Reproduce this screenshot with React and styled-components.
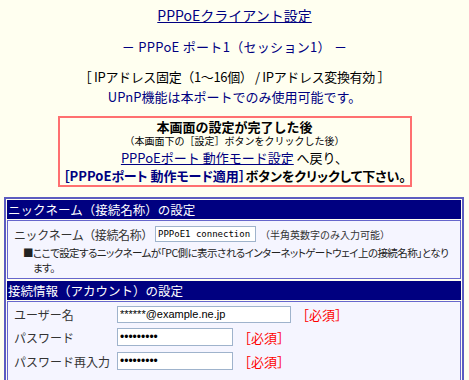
import styled, { createGlobalStyle } from "styled-components";

const GlobalStyle = createGlobalStyle`
  body {
    margin: 0;
    background: #fffff0;
    font-family: "Noto Sans CJK JP", "Liberation Sans", sans-serif;
    color: #000;
  }
`;

const Page = styled.div`
  display: flex;
  flex-direction: column;
  align-items: center;
`;

const Title = styled.a`
  margin-top: 7px;
  font-size: 14px;
  line-height: 16px;
  color: #000080;
  text-decoration: underline;
`;

const SubTitle = styled.div`
  margin-top: 16px;
  font-size: 13px;
  line-height: 16px;
  letter-spacing: 0.3px;
  color: #000080;
  white-space: pre;
`;

const Notice = styled.div`
  margin-top: 12px;
  font-size: 13px;
  line-height: 20px;
  letter-spacing: ${(p) => (p.$navy ? 0 : -0.35)}px;
  text-align: center;
  color: ${(p) => (p.$navy ? "#000080" : "#000")};
  & + & {
    margin-top: 0;
  }
`;

const AlertBox = styled.div`
  margin-top: 9px;
  width: 354px;
  box-sizing: border-box;
  border: 2px solid #ff7070;
  padding: 1px 0 1px;
  text-align: center;
`;

const AlertLine = styled.div`
  font-size: ${(p) => p.$size || 13}px;
  line-height: ${(p) => p.$lh || 17}px;
  font-weight: ${(p) => (p.$bold ? 700 : 400)};
  margin-top: ${(p) => p.$mt || 0}px;
  font-feature-settings: ${(p) => (p.$palt ? '"palt"' : "normal")};
  white-space: nowrap;
`;

const NavyLink = styled.a`
  color: #000080;
  text-decoration: underline;
`;

const Navy = styled.span`
  color: #000080;
`;

const Panel = styled.div`
  align-self: stretch;
  margin: 10px 5px 0 4px;
  border: 2px solid #5c5cc0;
  padding: 1px;
  display: flex;
  flex-direction: column;
  gap: 1px;
`;

const Header = styled.div`
  background: #000080;
  color: #fff;
  font-size: 12.5px;
  line-height: 19px;
  padding-left: 1px;
  & ~ & {
    margin-top: 1px;
  }
`;

const Cell = styled.div`
  background: #f5f5ff;
  border: 1px solid #6666cc;
  padding: ${(p) => p.$pad || "5px 3px 3px 6px"};
  color: #333;
`;

const FieldRow = styled.div`
  display: flex;
  align-items: center;
  height: ${(p) => p.$h || 24}px;
  font-size: 12px;
`;

const Label = styled.div`
  width: ${(p) => p.$w || 103}px;
  flex: none;
  font-size: 12px;
  letter-spacing: ${(p) => p.$ls || 0}px;
`;

const Input = styled.input`
  box-sizing: border-box;
  width: ${(p) => p.$w}px;
  height: ${(p) => p.$h || 18}px;
  border: 1px solid #9fb3cc;
  background: #fff;
  padding: 0 2px;
  margin: 0;
  font-family: ${(p) =>
    p.$mono ? '"DejaVu Sans Mono", monospace' : '"Liberation Sans", sans-serif'};
  font-size: ${(p) => p.$fs || 11}px;
  color: #000;
  outline: none;
`;

const Hint = styled.span`
  margin-left: 4px;
  font-size: 10px;
`;

const Required = styled.span`
  margin-left: 5px;
  color: #ff0000;
  font-size: 13px;
`;

const Note = styled.div`
  margin-top: 3px;
  margin-left: 9px;
  padding-left: 10px;
  text-indent: -10px;
  font-size: 10.5px;
  line-height: 15px;
  letter-spacing: -0.55px;
  font-feature-settings: "palt";
  color: #222;
`;

const SubTable = styled.div`
  margin: 8px 8px 0 8px;
  height: 20px;
  border-top: 1px solid #333;
`;

export default function App() {
  return (
    <Page>
      <GlobalStyle />
      <Title href="#">PPPoEクライアント設定</Title>
      <SubTitle>－ PPPoE ポート1（セッション1） －</SubTitle>
      <Notice>［ IPアドレス固定（1～16個） / IPアドレス変換有効 ］</Notice>
      <Notice $navy>UPnP機能は本ポートでのみ使用可能です。</Notice>
      <AlertBox>
        <AlertLine $bold $lh={15}>本画面の設定が完了した後</AlertLine>
        <AlertLine $size={10} $lh={13}>（本画面下の［設定］ボタンをクリックした後）</AlertLine>
        <AlertLine $mt={2} $lh={18}>
          <NavyLink href="#">PPPoEポート 動作モード設定</NavyLink> へ戻り、
        </AlertLine>
        <AlertLine $bold $palt $lh={17}>
          <Navy>［PPPoEポート 動作モード適用］</Navy>ボタンをクリックして下さい。
        </AlertLine>
      </AlertBox>
      <Panel>
        <Header>ニックネーム（接続名称）の設定</Header>
        <Cell>
          <FieldRow $h={16}>
            <Label $w={141} $ls={-0.4}>ニックネーム（接続名称）</Label>
            <Input $w={101} $h={16} $mono $fs={9} defaultValue="PPPoE1 connection" />
            <Hint>（半角英数字のみ入力可能）</Hint>
          </FieldRow>
          <Note>
            ■ここで設定するニックネームが「PC側に表示されるインターネットゲートウェイ上の接続名称」となります。
          </Note>
        </Cell>
        <Header>接続情報（アカウント）の設定</Header>
        <Cell $pad="1px 8px 0 6px">
          <FieldRow $h={22}>
            <Label>ユーザー名</Label>
            <Input $w={174} $h={17} defaultValue="******@example.ne.jp" />
            <Required>［必須］</Required>
          </FieldRow>
          <FieldRow>
            <Label>パスワード</Label>
            <Input $w={116} type="password" $fs={12} defaultValue="abcdefghi" />
            <Required>［必須］</Required>
          </FieldRow>
          <FieldRow>
            <Label>パスワード再入力</Label>
            <Input $w={116} type="password" $fs={12} defaultValue="abcdefghi" />
            <Required>［必須］</Required>
          </FieldRow>
          <SubTable />
        </Cell>
      </Panel>
    </Page>
  );
}
